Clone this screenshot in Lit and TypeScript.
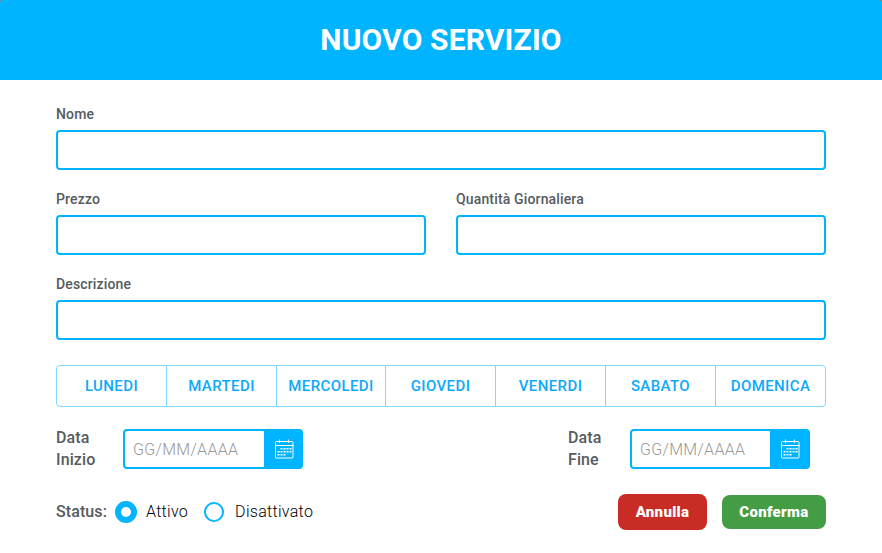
import { LitElement, html, css, svg } from "lit";
import { customElement, property } from "lit/decorators.js";

const DAYS = ["LUNEDI", "MARTEDI", "MERCOLEDI", "GIOVEDI", "VENERDI", "SABATO", "DOMENICA"];

// Calendar day marks: the first row starts late, the last one ends early.
const DOTS: [number, number][] = [];
for (let row = 0; row < 3; row++) {
  for (let col = 0; col < 5; col++) {
    if ((row === 0 && col < 1) || (row === 2 && col > 2)) continue;
    DOTS.push([2.5 + col * 3, 9 + row * 3]);
  }
}

@customElement("text-field")
export class TextField extends LitElement {
  @property() label = "";
  static styles = css`
    :host { display: block; }
    label { display: block; height: 20px; margin-bottom: 6px; margin-top: -1px; font-size: 14px; font-weight: 500; line-height: 20px; letter-spacing: 0.15px; color: #565b60; }
    input { display: block; box-sizing: border-box; width: 100%; height: 40px; border: 2px solid #00b4ff; border-radius: 4px; padding: 0 8px; outline: 0; background: #fff; font: 300 16px Roboto, sans-serif; }
  `;
  render() {
    return html`<label for="field">${this.label}</label><input id="field" type="text" />`;
  }
}

@customElement("date-field")
export class DateField extends LitElement {
  static styles = css`
    :host { display: flex; box-sizing: border-box; width: 180px; height: 40px; border: 2px solid #00b4ff; border-radius: 4px; background: #00b4ff; }
    input { flex: 1; min-width: 0; border: 0; outline: 0; padding: 0 8px; background: #fff; border-radius: 2px 0 0 2px; font: 300 16px Roboto, sans-serif; letter-spacing: 0.3px; }
    input::placeholder { color: #999; opacity: 1; }
    button { display: flex; align-items: center; justify-content: center; flex: none; width: 37px; padding: 0; border: 0; background: #00b4ff; }
    :host(.late) button { width: 38px; }
    svg { display: block; width: 19px; height: 20px; margin-left: 3px; }
  `;
  render() {
    return html`<input type="text" placeholder="GG/MM/AAAA" aria-label="Data" />
      <button aria-label="Calendario">
        <svg viewBox="0 0 19 20" fill="none" stroke="#fff">
          <rect x=".5" y="2.5" width="17.5" height="16.5" rx="1" />
          <path d="M.5 6.5h18M4.5.5v3.5M13.5.5v3.5" />
          ${DOTS.map(([x, y]) => svg`<rect x=${x} y=${y} width="2" height="1.5" fill="#fff" stroke="none" />`)}
        </svg>
      </button>`;
  }
}

@customElement("app-root")
export class AppRoot extends LitElement {
  static styles = css`
    :host { display: block; height: 553px; overflow: hidden; background: #fff; font-family: Roboto, sans-serif; color: #565b60; }
    header { display: flex; align-items: center; justify-content: center; height: 80px; background: #00b4ff; border-radius: 3px 3px 0 0; }
    .top { background: #8b8078; }
    h1 { margin: 0; font-size: 30px; font-weight: 700; line-height: 40px; letter-spacing: 0.15px; color: #fff; }
    main { padding: 25px 56px 0; }
    .fields { display: grid; grid-template-columns: 1fr 1fr; gap: 20px 30px; }
    .wide { grid-column: 1 / -1; }
    .days { display: grid; grid-template-columns: 110px 110px 109px 110px 110px 110px 109px; box-sizing: border-box; height: 42px; margin-top: 25px; border: 1px solid #80d9ff; border-radius: 4px; }
    .day { padding: 0; border: 0; border-right: 1px solid #80d9ff; background: none; color: #0ea9f8; font: 500 15px Roboto, sans-serif; letter-spacing: 0.4px; }
    .day:last-child { border-right: 0; }
    .dates { display: flex; align-items: center; margin-top: 20px; height: 44px; }
    .date-label { font-size: 16px; font-weight: 500; line-height: 22px; letter-spacing: 0.1px; }
    .start { width: 67px; }
    .end { width: 62px; margin-left: 265px; }
    .bottom { display: flex; align-items: center; height: 36px; margin-top: 23px; }
    .status { width: 59px; padding-bottom: 2px; font-size: 16px; font-weight: 500; letter-spacing: 0.1px; white-space: nowrap; }
    .choice { display: flex; align-items: center; font-size: 16px; font-weight: 300; letter-spacing: 0.3px; color: #000; }
    .text { padding-bottom: 2px; }
    .radio { box-sizing: border-box; width: 20px; height: 20px; margin-right: 11px; border: 2px solid #00b4ff; border-radius: 50%; }
    .radio.on { width: 22px; height: 22px; margin-right: 9px; border-width: 6px; }
    .second { margin-left: 16px; }
    .actions { display: flex; align-items: center; gap: 15px; margin-left: auto; }
    .action { padding: 0; width: 104px; height: 34px; border: 0; border-radius: 8px; background: #449d44; color: #fff; font: 900 15px Roboto, sans-serif; letter-spacing: 0.32px; }
    .cancel { width: 89px; height: 36px; background: #c92c25; }
  `;
  render() {
    return html`
      <div class="top"><header><h1>NUOVO SERVIZIO</h1></header></div>
      <main>
        <div class="fields">
          <text-field class="wide" label="Nome"></text-field>
          <text-field label="Prezzo"></text-field>
          <text-field label="Quantità Giornaliera"></text-field>
          <text-field class="wide" label="Descrizione"></text-field>
        </div>
        <div class="days">${DAYS.map((d) => html`<button class="day">${d}</button>`)}</div>
        <div class="dates">
          <div class="date-label start">Data<br />Inizio</div>
          <date-field></date-field>
          <div class="date-label end">Data<br />Fine</div>
          <date-field class="late"></date-field>
        </div>
        <div class="bottom">
          <div class="status">Status:</div>
          <div class="choice"><span class="radio on"></span><span class="text">Attivo</span></div>
          <div class="choice second"><span class="radio"></span><span class="text">Disattivato</span></div>
          <div class="actions">
            <button class="action cancel">Annulla</button>
            <button class="action">Conferma</button>
          </div>
        </div>
      </main>`;
  }
}
